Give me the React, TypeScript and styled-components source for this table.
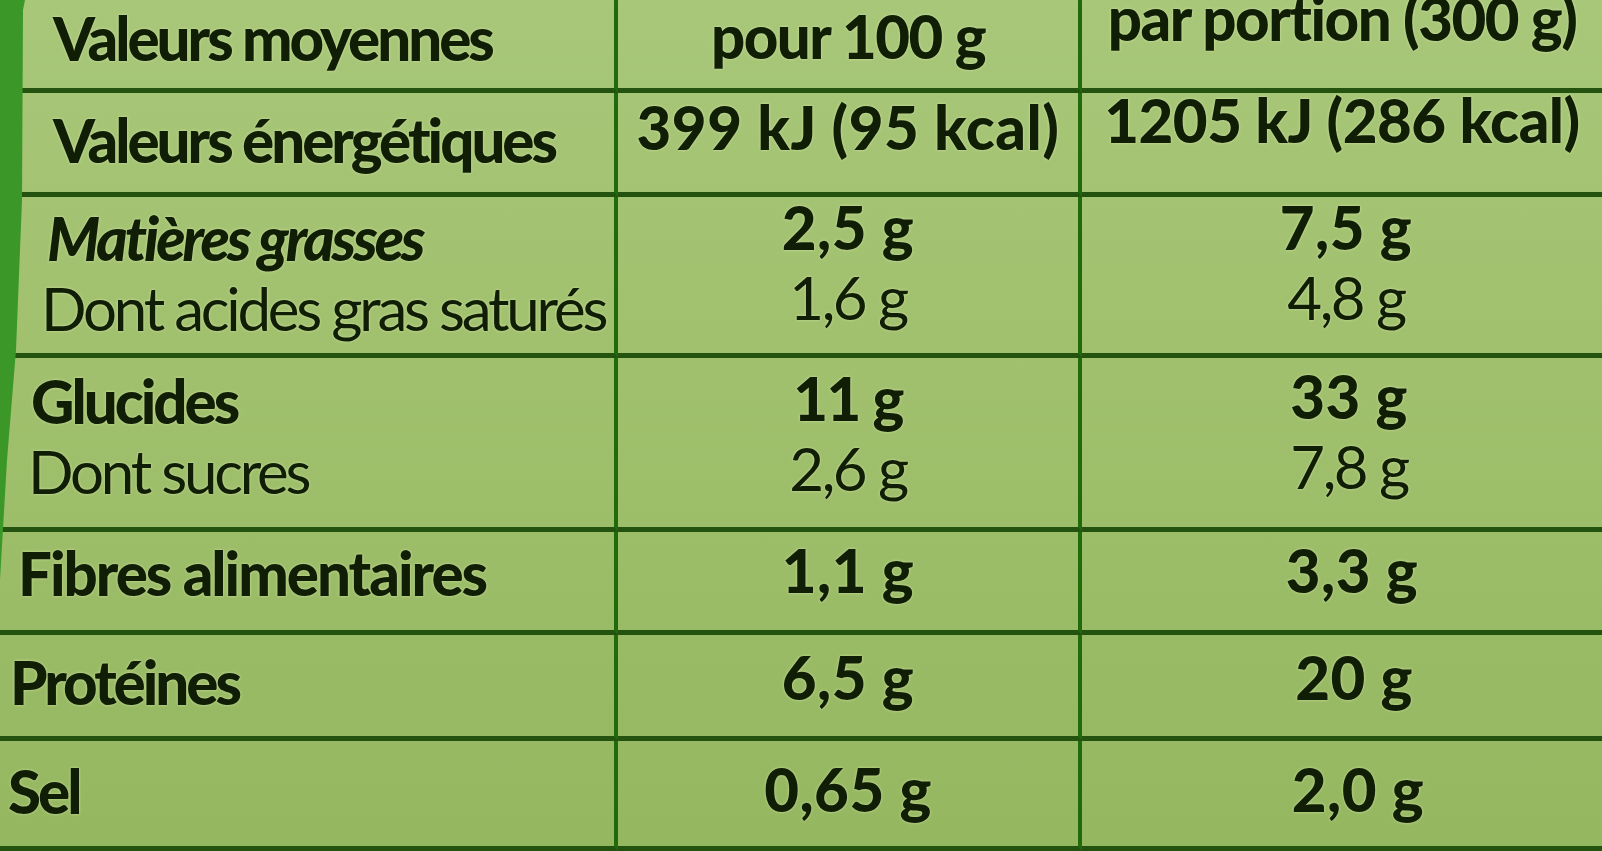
import React from "react";
import styled, { createGlobalStyle } from "styled-components";

const Global = createGlobalStyle`
  html, body { margin: 0; padding: 0; }
  body { width: 1602px; height: 851px; overflow: hidden; background: #9dbf6a; }
`;

const Page = styled.div`
  position: relative;
  width: 1602px;
  height: 851px;
  overflow: hidden;
  background: linear-gradient(180deg, #a8c779 0%, #a0c06d 45%, #95b760 100%);
  font-family: Lato, "Open Sans", sans-serif;
  color: #101e06;
`;

const EdgeStrip = styled.div`
  position: absolute;
  left: 0;
  top: 0;
  width: 26px;
  height: 600px;
  background: #3b9828;
  clip-path: polygon(0 0, 25px 0, 23px 10px, 22px 200px, 16px 350px, 7px 460px, 0 580px);
  z-index: 2;
`;

const Table = styled.div`
  display: grid;
  grid-template-columns: 618px 464px 1fr;
  grid-template-rows: 93px 104px 161px 174px 103px 106px 110px;
  width: 1602px;
`;

const Cell = styled.div<{ $last?: boolean; $center?: boolean; $pl?: number }>`
  border-bottom: 5px solid #24520f;
  border-right: ${(p) => (p.$last ? "none" : "4px solid #216a0c")};
  display: flex;
  flex-direction: column;
  align-items: ${(p) => (p.$center ? "center" : "flex-start")};
  padding-left: ${(p) => p.$pl ?? 0}px;
  box-sizing: border-box;
`;

const Stack = styled.div<{ $dy: number }>`
  margin-top: ${(p) => p.$dy}px;
  display: flex;
  flex-direction: column;
  align-items: inherit;
`;

const Text = styled.span<{ $weight?: "bold" | "regular"; $italic?: boolean; $ls: number; $indent?: number }>`
  display: block;
  font-size: 60px;
  line-height: 70px;
  white-space: nowrap;
  font-weight: ${(p) => (p.$weight === "regular" ? 400 : 900)};
  font-style: ${(p) => (p.$italic ? "italic" : "normal")};
  letter-spacing: ${(p) => p.$ls}px;
  margin-left: ${(p) => p.$indent ?? 0}px;
  text-shadow: 0 0 3px rgba(225, 240, 180, 0.75);
`;

type Line = { t: string; w?: "bold" | "regular"; i?: boolean; ls?: number; indent?: number };
type Row = {
  label: Line[];
  pl: number;
  dy: [number, number, number];
  a: Line[];
  b: Line[];
  bShift: number;
};

const rows: Row[] = [
  {
    label: [{ t: "Valeurs moyennes" }],
    pl: 53,
    dy: [3, 1, -17],
    a: [{ t: "pour 100 g", ls: -1.5 }],
    b: [{ t: "par portion (300 g)", ls: -1.5 }],
    bShift: 0,
  },
  {
    label: [{ t: "Valeurs énergétiques" }],
    pl: 53,
    dy: [12, -1, -8],
    a: [{ t: "399 kJ (95 kcal)" }],
    b: [{ t: "1205 kJ (286 kcal)", ls: -0.5 }],
    bShift: 0,
  },
  {
    label: [
      { t: "Matières grasses", i: true, indent: 6 },
      { t: "Dont acides gras saturés", w: "regular" },
    ],
    pl: 41,
    dy: [6, -5, -5],
    a: [{ t: "2,5 g" }, { t: "1,6 g", w: "regular" }],
    b: [{ t: "7,5 g" }, { t: "4,8 g", w: "regular" }],
    bShift: 8,
  },
  {
    label: [{ t: "Glucides", indent: 3 }, { t: "Dont sucres", w: "regular" }],
    pl: 28,
    dy: [8, 5, 3],
    a: [{ t: "11 g", ls: -1.5 }, { t: "2,6 g", w: "regular" }],
    b: [{ t: "33 g" }, { t: "7,8 g", w: "regular" }],
    bShift: 14,
  },
  {
    label: [{ t: "Fibres alimentaires", ls: -2 }],
    pl: 18,
    dy: [6, 3, 3],
    a: [{ t: "1,1 g" }],
    b: [{ t: "3,3 g" }],
    bShift: 20,
  },
  {
    label: [{ t: "Protéines" }],
    pl: 10,
    dy: [12, 7, 7],
    a: [{ t: "6,5 g" }],
    b: [{ t: "20 g" }],
    bShift: 24,
  },
  {
    label: [{ t: "Sel" }],
    pl: 8,
    dy: [15, 13, 13],
    a: [{ t: "0,65 g" }],
    b: [{ t: "2,0 g" }],
    bShift: 32,
  },
];

const lsFor = (l: Line, value: boolean) => {
  if (l.ls !== undefined) return l.ls;
  if (value) return l.w === "regular" ? -2.5 : 0.5;
  return l.w === "regular" ? -3.2 : -3;
};

const renderLines = (lines: Line[], value = false) =>
  lines.map((l, i) => (
    <Text key={i} $weight={l.w} $italic={l.i} $ls={lsFor(l, value)} $indent={l.indent}>
      {l.t}
    </Text>
  ));

export default function App() {
  return (
    <>
      <Global />
      <Page>
        <EdgeStrip />
        <Table>
          {rows.map((r, i) => (
            <React.Fragment key={i}>
              <Cell $pl={r.pl}>
                <Stack $dy={r.dy[0]}>{renderLines(r.label)}</Stack>
              </Cell>
              <Cell $center>
                <Stack $dy={r.dy[1]}>{renderLines(r.a, true)}</Stack>
              </Cell>
              <Cell $center $last $pl={r.bShift}>
                <Stack $dy={r.dy[2]}>{renderLines(r.b, true)}</Stack>
              </Cell>
            </React.Fragment>
          ))}
        </Table>
      </Page>
    </>
  );
}
